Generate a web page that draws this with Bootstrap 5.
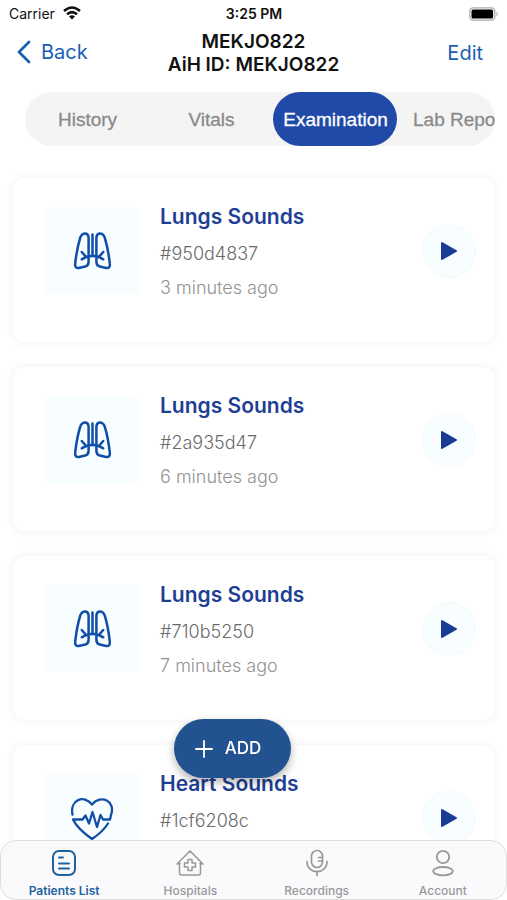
<!DOCTYPE html>
<html lang="en">
<head>
<meta charset="utf-8">
<meta name="viewport" content="width=device-width, initial-scale=1">
<title>Patient examination</title>
<link href="https://cdn.jsdelivr.net/npm/bootstrap@5.3.0/dist/css/bootstrap.min.css" rel="stylesheet">
<style>
body { font-family: Inter, "Liberation Sans", sans-serif; background: #fff; color: #111; }
.app { height: 100vh; overflow: hidden; }
.status { height: 28px; font-size: 14px; padding: 0 8px 2px 9px; }
.side { flex: 1 1 0; }
.topbar { height: 50px; padding: 0 16px; }
.topbar a { color: #1b5fb4; font-size: 20px; }
.topbar h1 { font-size: 19px; line-height: 23px; font-weight: 600; color: #111; }
.tabs { margin: 14px 12px 0 25px; height: 54px; border-radius: 27px; background: #f4f4f4; }
.tabs button { flex: 0 0 124px; border: 0; background: none; padding: 2px 0 0 1px; border-radius: 27px; font-family: "Liberation Sans", sans-serif; font-size: 19px; color: #8a8a8a; -webkit-text-stroke: 0.3px currentColor; }
.tabs button.on { background: #2149a8; color: #fff; }
.tabs button.tail { text-align: left; padding-left: 16px; }
.records { padding: 32px 12px 0 13px; gap: 25px; }
.record { flex: none; height: 164px; border: 0; border-radius: 12px; padding: 29px 19px 0 30px; box-shadow: 0 0 7px 2px rgba(0,0,0,.04); background: #fff; }
.thumb { width: 98px; height: 87px; border-radius: 8px; background: #f8feff; color: #0f4fa8; margin-right: 19px; flex: none; }
.record h2 { font-size: 21px; line-height: 24px; font-weight: 600; color: #1f3f94; margin: -2px 0 13px; }
.code { font-size: 18px; line-height: 24px; color: #6a6a6a; margin: 0 0 10px; font-weight: 300; }
.when { font-size: 18px; line-height: 24px; color: #929292; margin: 0; font-weight: 300; }
.play { width: 54px; height: 54px; border: 1px solid #f2fafa; border-radius: 50%; background: #f8feff; color: #1a3c94; padding: 0; margin-top: 17px; flex: none; }
.play svg { display: block; margin: 0 auto; }
.add { position: fixed; left: calc(50% - 80px); bottom: 122px; width: 117px; height: 59px; border: 0; border-radius: 30px; background: #22528f; color: #fff; font-size: 17px; font-weight: 500; padding: 0 12px 0 4px; box-shadow: 0 4px 8px rgba(0,0,0,.3); }
.dock { height: 60px; background: #fafafc; border: 1px solid #dededf; border-radius: 16px; }
.dock a { flex: 1 1 0; color: #98989b; font-size: 12px; line-height: 14px; font-weight: 500; padding-top: 8px; }
.dock a.on { color: #1d639e; font-weight: 600; }
.dock svg { margin-bottom: 7px; }
</style>
<script src="https://cdn.jsdelivr.net/npm/bootstrap@5.3.0/dist/js/bootstrap.bundle.min.js"></script>
</head>
<body>
<svg class="d-none" xmlns="http://www.w3.org/2000/svg">
  <symbol id="lungs" viewBox="0 0 40 40"><g fill="none" stroke="currentColor" stroke-width="2.6" stroke-linecap="round" stroke-linejoin="round"><path d="M16 24V6Q15.500 2 12.500 2Q9 2 7.500 6C5 14 3.500 22 2.300 32.500Q1.500 38 6 37.500L12.500 36Q16 35 16 31V27.500"/><path d="M24 24V6Q24.500 2 27.500 2Q31 2 32.500 6C35 14 36.500 22 37.700 32.500Q38.500 38 34 37.500L27.500 36Q24 35 24 31V27.500"/><path d="M20 3V24M9 28.500Q15 25 20 25Q25 25 31 28.500M9 21L13.500 26.200M31 21L26.500 26.200"/></g></symbol>
  <symbol id="heart" viewBox="0 0 44 44"><g fill="none" stroke="currentColor" stroke-width="2.3" stroke-linecap="round" stroke-linejoin="round"><path d="M2.500 18.500C-0.500 4 14-2 22 8.500C31-2 46 5 41 19L40 23.500H33L30.500 19L27 31L22.500 16L19 27.500L15.500 19.500L12.500 23.500H3C7 32 15 38 22 43C28 39 34 34 38 27.500"/></g></symbol>
  <symbol id="tri" viewBox="0 0 18 20"><path d="M2 2L16 10L2 18Z" fill="currentColor" stroke="currentColor" stroke-width="2" stroke-linejoin="round"/></symbol>
</svg>
<div class="app d-flex flex-column">
  <header>
    <div class="status d-flex align-items-center">
      <div class="side d-flex align-items-center">Carrier
        <svg class="ms-2" width="18" height="14" viewBox="0 0 18 14"><g fill="none" stroke="#111" stroke-width="2.500"><path d="M1 5Q9-2 17 5M4 8.300Q9 4 14 8.300"/></g><path d="M9 13.500L6 10.500Q9 8 12 10.500Z" fill="#111"/></svg>
      </div>
      <span class="fw-semibold">3:25 PM</span>
      <div class="side text-end lh-1">
        <svg width="30" height="14" viewBox="0 0 30 14"><rect x=".8" y=".8" width="25" height="12.400" rx="3.500" fill="#fff" stroke="#aaa" stroke-width="1.300"/><rect x="2.500" y="2.500" width="21.600" height="9" rx="1.500"/><path d="M27.500 4.500Q30 7 27.500 9.500Z" fill="#aaa"/></svg>
      </div>
    </div>
    <div class="topbar d-flex align-items-center">
      <div class="side"><a href="#" class="text-decoration-none d-inline-flex align-items-center"><svg class="me-2" width="17" height="24" viewBox="0 0 17 24"><path d="M13 2L3 12L13 22" fill="none" stroke="currentColor" stroke-width="2.800" stroke-linecap="round" stroke-linejoin="round"/></svg>Back</a></div>
      <h1 class="text-center m-0">MEKJO822<br>AiH ID: MEKJO822</h1>
      <div class="side text-end"><a href="#" class="text-decoration-none me-2">Edit</a></div>
    </div>
    <div class="tabs d-flex overflow-hidden" role="tablist">
      <button type="button" role="tab">History</button>
      <button type="button" role="tab">Vitals</button>
      <button type="button" role="tab" class="on" aria-selected="true">Examination</button>
      <button type="button" role="tab" class="tail">Lab Repo</button>
    </div>
  </header>
  <main class="records d-flex flex-column flex-fill overflow-hidden">
    <article class="record d-flex align-items-start">
      <div class="thumb d-flex align-items-center justify-content-center"><svg width="39" height="40"><use href="#lungs"/></svg></div>
      <div class="flex-fill"><h2>Lungs Sounds</h2><p class="code">#950d4837</p><p class="when">3 minutes ago</p></div>
      <button type="button" class="play" aria-label="Play"><svg width="18" height="20"><use href="#tri"/></svg></button>
    </article>
    <article class="record d-flex align-items-start">
      <div class="thumb d-flex align-items-center justify-content-center"><svg width="39" height="40"><use href="#lungs"/></svg></div>
      <div class="flex-fill"><h2>Lungs Sounds</h2><p class="code">#2a935d47</p><p class="when">6 minutes ago</p></div>
      <button type="button" class="play" aria-label="Play"><svg width="18" height="20"><use href="#tri"/></svg></button>
    </article>
    <article class="record d-flex align-items-start">
      <div class="thumb d-flex align-items-center justify-content-center"><svg width="39" height="40"><use href="#lungs"/></svg></div>
      <div class="flex-fill"><h2>Lungs Sounds</h2><p class="code">#710b5250</p><p class="when">7 minutes ago</p></div>
      <button type="button" class="play" aria-label="Play"><svg width="18" height="20"><use href="#tri"/></svg></button>
    </article>
    <article class="record d-flex align-items-start">
      <div class="thumb d-flex align-items-center justify-content-center"><svg width="44" height="44"><use href="#heart"/></svg></div>
      <div class="flex-fill"><h2>Heart Sounds</h2><p class="code">#1cf6208c</p></div>
      <button type="button" class="play" aria-label="Play"><svg width="18" height="20"><use href="#tri"/></svg></button>
    </article>
  </main>
  <button type="button" class="add d-flex align-items-center justify-content-center gap-2"><svg class="me-1" width="18" height="18" viewBox="0 0 18 18"><path d="M9 1V17M1 9H17" stroke="currentColor" stroke-width="1.800" stroke-linecap="round"/></svg>ADD</button>
  <nav class="dock d-flex flex-shrink-0">
    <a href="#" class="on text-decoration-none d-flex flex-column align-items-center"><svg width="28" height="28" viewBox="0 0 28 28"><g fill="none" stroke="currentColor" stroke-width="2" stroke-linecap="round"><rect x="3" y="2" width="22" height="24" rx="6"/><path d="M9 8.500H13M9 14.500H19M9 19.500H19"/></g></svg>Patients List</a>
    <a href="#" class="text-decoration-none d-flex flex-column align-items-center"><svg width="28" height="28" viewBox="0 0 28 28"><g fill="none" stroke="currentColor" stroke-width="1.500" stroke-linejoin="round" stroke-linecap="round"><path d="M4 14.500L1 15L14 2L27 15L24 14.500M3.500 13.500V24Q3.500 26 5.500 26H22.500Q24.500 26 24.500 24V13.500"/><path d="M12 10.500H16V14H19.500V18H16V21.500H12V18H8.500V14H12Z"/></g></svg>Hospitals</a>
    <a href="#" class="text-decoration-none d-flex flex-column align-items-center"><svg width="28" height="28" viewBox="0 0 28 28"><g fill="none" stroke="currentColor" stroke-width="1.700" stroke-linecap="round"><rect x="8.500" y="1.500" width="11" height="17" rx="5.500"/><path d="M4 12.500C4 26 24 26 24 12.500M14 22.500V26.500M15.500 8.500H19M15.500 12H19"/></g></svg>Recordings</a>
    <a href="#" class="text-decoration-none d-flex flex-column align-items-center"><svg width="28" height="28" viewBox="0 0 28 28"><g fill="none" stroke="currentColor" stroke-width="1.800"><circle cx="14" cy="8" r="6.200"/><ellipse cx="14" cy="22.200" rx="9.800" ry="4.200"/></g></svg>Account</a>
  </nav>
</div>
</body>
</html>
